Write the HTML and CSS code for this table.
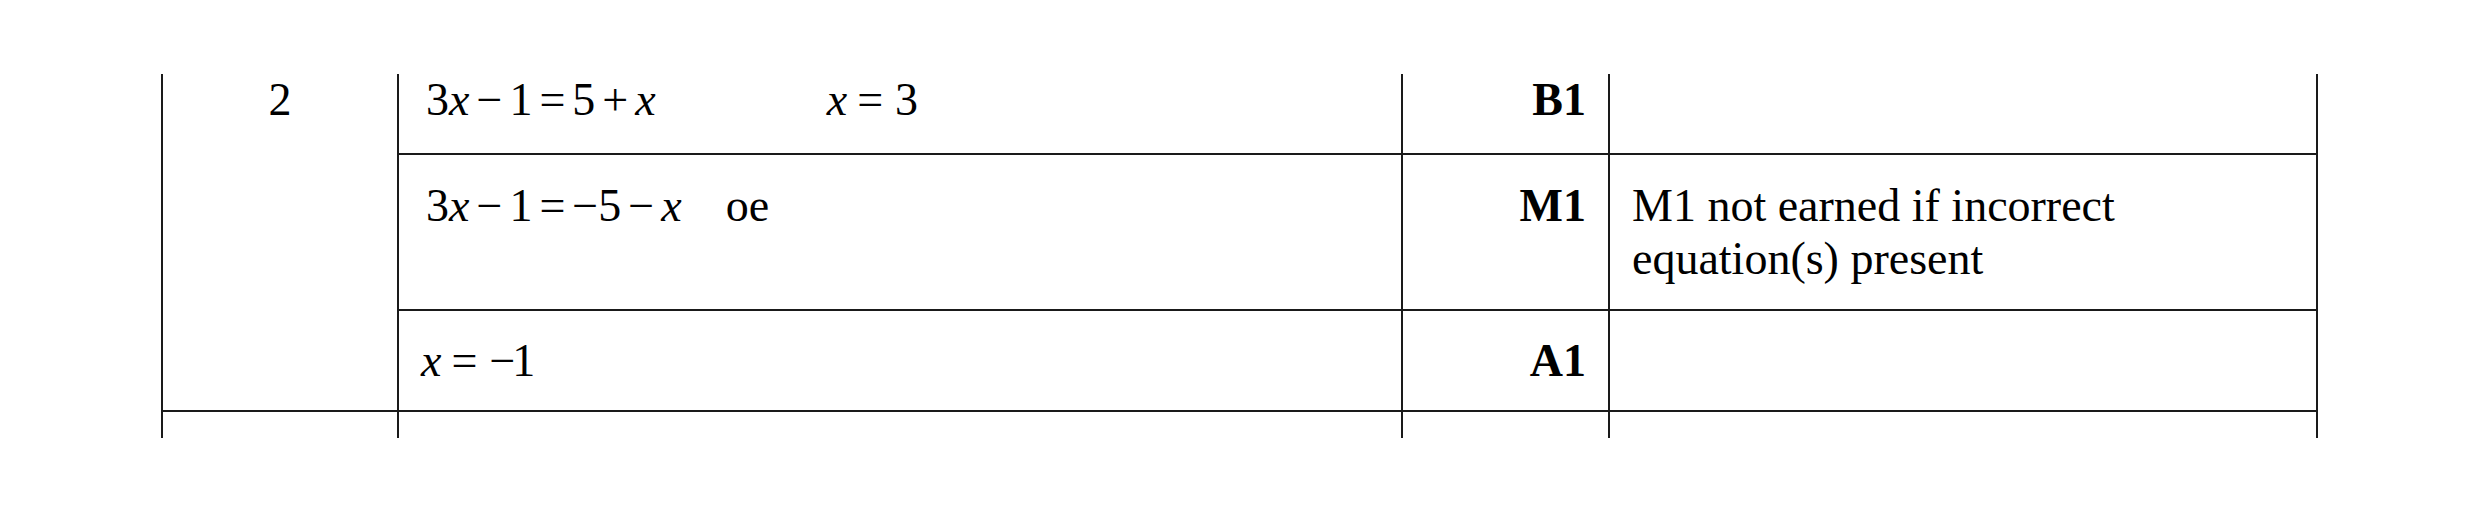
FILE: index.html
```html
<!DOCTYPE html>
<html lang="en">
<head>
<meta charset="utf-8">
<title>Mark scheme</title>
<link rel="stylesheet" href="styles.css">
</head>
<body>
<div class="scheme">
  <div class="cell qnum">2</div>

  <div class="cell work r1"><span class="eq indent">3<i>x</i><span class="op">−</span>1<span class="op">=</span>5<span class="op">+</span><i>x</i></span><span class="eq ans"><i>x</i><span class="rel">=</span>3</span></div>
  <div class="cell mark r1">B1</div>
  <div class="cell note r1"></div>

  <div class="cell work r2"><span class="eq indent">3<i>x</i><span class="op">−</span>1<span class="op">=</span>−5<span class="op">−</span><i>x</i></span><span class="oe">oe</span></div>
  <div class="cell mark r2">M1</div>
  <div class="cell note r2">M1 not earned if incorrect equation(s) present</div>

  <div class="cell work r3"><span class="eq"><i>x</i><span class="rel">=</span><span class="un">−</span>1</span></div>
  <div class="cell mark r3">A1</div>
  <div class="cell note r3"></div>

  <div class="cell r4"></div>
  <div class="cell r4"></div>
  <div class="cell r4"></div>
  <div class="cell note r4"></div>
</div>
</body>
</html>
```

FILE: styles.css
```css
html, body {
  margin: 0;
  padding: 0;
  background: #ffffff;
}

body {
  width: 2480px;
  height: 512px;
  overflow: hidden;
  font-family: "Liberation Serif", "Times New Roman", serif;
  font-size: 46px;
  line-height: 52.7px;
  color: #000000;
}

.scheme {
  margin: 74px 0 0 161px;
  width: 2157px;
  display: grid;
  grid-template-columns: 236px 1004px 207px 710px;
  grid-template-rows: 81px 156px 101px 26px;
}

.cell {
  box-sizing: border-box;
  border-left: 2px solid #1a1a1a;
  padding: 0 22px;
}

.qnum {
  grid-column: 1;
  grid-row: 1 / 4;
  text-align: center;
  border-bottom: 2px solid #1a1a1a;
  padding: 0;
}

.r1, .r2, .r3 {
  border-bottom: 2px solid #1a1a1a;
}

.r1 { padding-top: 0; }
.r2 { padding-top: 25px; }
.r3 { padding-top: 24px; }

.note {
  border-right: 2px solid #1a1a1a;
}

.mark {
  text-align: right;
  font-weight: bold;
}

.work {
  white-space: nowrap;
}

.eq i {
  font-style: italic;
}

.indent {
  margin-left: 5px;
}

.op {
  margin: 0 7px;
}

.rel {
  margin: 0 12px 0 10px;
}

.un {
  margin-right: -3px;
}

.ans {
  margin-left: 171px;
}

.oe {
  margin-left: 44px;
}
```
